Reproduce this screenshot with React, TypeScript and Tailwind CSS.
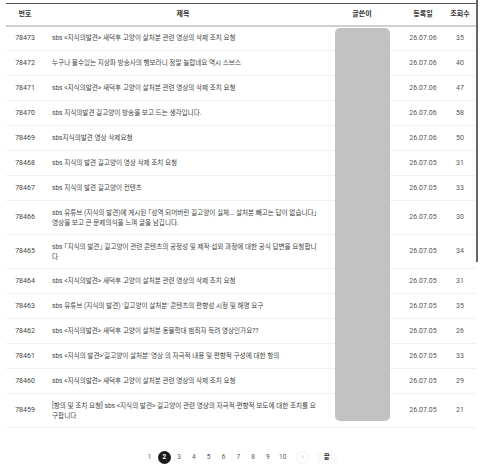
import React from "react";

type Row = { no: number; title: string; date: string; views: number; tall?: boolean };

const rows: Row[] = [
  { no: 78473, title: "sbs <지식의발견> 새덕후 고양이 살처분 관련 영상의 삭제 조치 요청", date: "26.07.06", views: 35 },
  { no: 78472, title: "누구나 볼수있는 지상파 방송사의 행보라니 정말 놀랍네요 역시 스브스", date: "26.07.06", views: 40 },
  { no: 78471, title: "sbs <지식의발견> 새덕후 고양이 살처분 관련 영상의 삭제 조치 요청", date: "26.07.06", views: 47 },
  { no: 78470, title: "sbs 지식의발견 길고양이 방송을 보고 드는 생각입니다.", date: "26.07.06", views: 58 },
  { no: 78469, title: "sbs지식의발견 영상 삭제요청", date: "26.07.06", views: 50 },
  { no: 78468, title: "sbs 지식의 발견 길고양이 영상 삭제 조치 요청", date: "26.07.05", views: 31 },
  { no: 78467, title: "sbs 지식의 발견 길고양이 컨텐츠", date: "26.07.05", views: 33 },
  { no: 78466, title: "sbs 유튜브 (지식의 발견)에 게시된 「성역 되어버린 길고양이 실체... 살처분 빼고는 답이 없습니다」 영상을 보고 큰 문제의식을 느껴 글을 남깁니다.", date: "26.07.05", views: 30, tall: true },
  { no: 78465, title: "sbs 「지식의 발견」 길고양이 관련 콘텐츠의 공정성 및 제작·섭외 과정에 대한 공식 답변을 요청합니다", date: "26.07.05", views: 34, tall: true },
  { no: 78464, title: "sbs <지식의발견> 새덕후 고양이 살처분 관련 영상의 삭제 조치 요청", date: "26.07.05", views: 31 },
  { no: 78463, title: "sbs 유튜브 (지식의 발견) '길고양이 살처분' 콘텐츠의 편향성 시정 및 해명 요구", date: "26.07.05", views: 35 },
  { no: 78462, title: "sbs <지식의발견> 새덕후 고양이 살처분 동물학대 범죄자 둑려 영상인가요??", date: "26.07.05", views: 26 },
  { no: 78461, title: "sbs <지식의 발견>'길고양이 살처분' 영상 의 자극적 내용 및 편향적 구성에 대한 항의", date: "26.07.05", views: 33 },
  { no: 78460, title: "sbs <지식의발견> 새덕후 고양이 살처분 관련 영상의 삭제 조치 요청", date: "26.07.05", views: 29 },
  { no: 78459, title: "[항의 및 조치 요청] sbs <지식의 발견> 길고양이 관련 영상의 자극적·편향적 보도에 대한 조치를 요구합니다", date: "26.07.05", views: 21, tall: true },
];

const pages = ["1", "2", "3", "4", "5", "6", "7", "8", "9", "10"];

export default function App() {
  return (
    <div
      className="relative w-[480px] h-[467px] bg-white overflow-hidden text-[#444]"
      style={{ fontFamily: '"Roboto", "Noto Sans CJK KR", sans-serif' }}
    >
      {/* scrollbar thumb */}
      <div className="absolute left-[476px] top-0 w-[1.5px] h-[262px] bg-[#666]" />

      <div className="pt-[3px] pl-[6px] pr-[4px]">
        <div className="relative">
          <table className="w-[470px] table-fixed border-collapse text-[7px]">
            <colgroup>
              <col className="w-[38px]" />
              <col className="w-[278px]" />
              <col className="w-[80px]" />
              <col className="w-[42px]" />
              <col className="w-[32px]" />
            </colgroup>
            <thead>
              <tr className="h-[22px] border-t border-[#555] border-b-2 border-b-[#cfcfcf] font-bold text-[#333]">
                <th className="text-center">번호</th>
                <th className="text-center">제목</th>
                <th className="text-center">글쓴이</th>
                <th className="text-center">등록일</th>
                <th className="text-center">조회수</th>
              </tr>
            </thead>
            <tbody>
              {rows.map((r) => (
                <tr
                  key={r.no}
                  className={`${r.tall ? "h-[34px]" : "h-[25px]"} border-b border-[#f1f1f1]`}
                >
                  <td className="text-center text-[#444]">{r.no}</td>
                  <td className="pl-[8px] pr-[3px] text-[6.6px] leading-[10px] text-[#444] [font-feature-settings:'halt']">
                    {r.title}
                  </td>
                  <td />
                  <td className="text-center text-[#555]">{r.date}</td>
                  <td className="text-center text-[#555]">{r.views}</td>
                </tr>
              ))}
            </tbody>
          </table>
          {/* writer column redaction */}
          <div className="absolute left-[329px] top-[25px] w-[55px] h-[393px] rounded-[5px] bg-[#c2c2c2]" />
        </div>
      </div>

      <div className="mt-[23px] flex items-center pl-[143px] text-[6.5px] text-[#555]">
        <div className="flex items-center gap-[1.8px]">
          {pages.map((p) => (
            <span
              key={p}
              className={
                p === "2"
                  ? "flex h-[13px] w-[13px] items-center justify-center rounded-full bg-[#1a1a1a] font-bold text-white"
                  : "flex h-[13px] w-[13px] items-center justify-center"
              }
            >
              {p}
            </span>
          ))}
          <span className="ml-[5px] flex h-[13px] w-[13px] items-center justify-center rounded-full border border-[#f2f2f2] text-[#999]">
            ›
          </span>
          <span className="ml-[6px] flex h-[13px] w-[20px] items-center justify-center rounded-[3px] bg-[#fafafa] font-bold text-[#333]">
            끝
          </span>
        </div>
      </div>
    </div>
  );
}
